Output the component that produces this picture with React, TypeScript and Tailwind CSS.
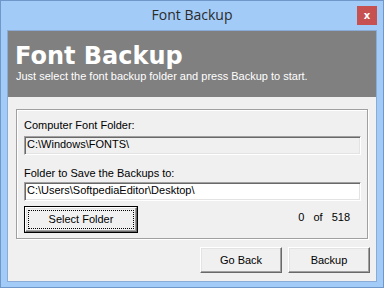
const SANS = "font-['Liberation_Sans',Arial,sans-serif]"

const raised =
  'border border-t-white border-l-white border-r-[#696969] border-b-[#696969] shadow-[inset_-1px_-1px_0_#a0a0a0,inset_1px_1px_0_#e3e3e3]'

const sunken =
  'border border-t-[#a0a0a0] border-l-[#a0a0a0] border-r-white border-b-white shadow-[inset_1px_1px_0_#696969,inset_-1px_-1px_0_#e3e3e3]'

function PathBox({ value, disabled }: { value: string; disabled?: boolean }) {
  return (
    <div
      className={`w-[337px] h-[19px] pl-[2px] pt-[1px] text-[11px] leading-[13px] text-black whitespace-nowrap overflow-hidden ${sunken} ${
        disabled ? 'bg-[#f0f0f0]' : 'bg-white'
      }`}
    >
      {value}
    </div>
  )
}

export default function App() {
  return (
    <div className={`w-[384px] h-[288px] bg-[#a3cbf7] border border-[#7097c9] px-[6px] pb-[5px] flex flex-col ${SANS}`}>
      {/* title bar */}
      <div className="h-[29px] grid grid-cols-[1fr_auto_1fr] items-start">
        <div />
        <div className="pt-[5px] text-[14px] leading-[18px] text-[#2b2b2b] font-['Open_Sans',sans-serif]">
          Font Backup
        </div>
        <div className="flex justify-end pt-[5px] mr-[0px]">
          <div className="w-[20px] h-[19px] bg-[#c75050] flex items-center justify-center text-white text-[10px] font-bold leading-none font-['DejaVu_Sans',sans-serif]">
            x
          </div>
        </div>
      </div>

      {/* client area */}
      <div className="flex-1 border border-[#8aabd6] bg-[#f0f0f0] flex flex-col">
        <div className="h-[66px] bg-[#808080] pl-[7px] pt-[11px] text-white">
          <div className="text-[24px] leading-[28px] font-bold font-['DejaVu_Sans',sans-serif]">Font Backup</div>
          <div className="text-[11px] leading-[13px] ml-[1px]">
            Just select the font backup folder and press Backup to start.
          </div>
        </div>

        <div className="mt-[12px] ml-[8px] w-[352px] h-[130px] border border-[#a0a0a0] shadow-[inset_1px_1px_0_#fff,1px_1px_0_#fff] pl-[7px] pt-[9px] text-[11px] leading-[13px] text-black">
          <div>Computer Font Folder:</div>
          <div className="mt-[4px]">
            <PathBox value="C:\Windows\FONTS\" disabled />
          </div>
          <div className="mt-[12px]">Folder to Save the Backups to:</div>
          <div className="mt-[2px]">
            <PathBox value="C:\Users\SoftpediaEditor\Desktop\" />
          </div>
          <div className="mt-[5px] flex items-start">
            <button className="w-[114px] h-[27px] border border-black bg-[#f0f0f0] p-0">
              <div className={`w-full h-full p-[2px] ${raised}`}>
                <div className="w-full h-full border border-dotted border-black flex items-center justify-center text-[11px] leading-[13px]">
                  Select Folder
                </div>
              </div>
            </button>
            <div className="ml-auto mr-[17px] pt-[5px] flex gap-[9px] text-[11px] leading-[13px]">
              <span>0</span>
              <span>of</span>
              <span>518</span>
            </div>
          </div>
        </div>

        <div className="mt-[8px] pr-[6px] flex justify-end gap-[6px]">
          {['Go Back', 'Backup'].map(label => (
            <button
              key={label}
              className={`w-[82px] h-[26px] bg-[#f0f0f0] text-[11px] leading-[13px] text-black ${raised}`}
            >
              {label}
            </button>
          ))}
        </div>
      </div>
    </div>
  )
}
